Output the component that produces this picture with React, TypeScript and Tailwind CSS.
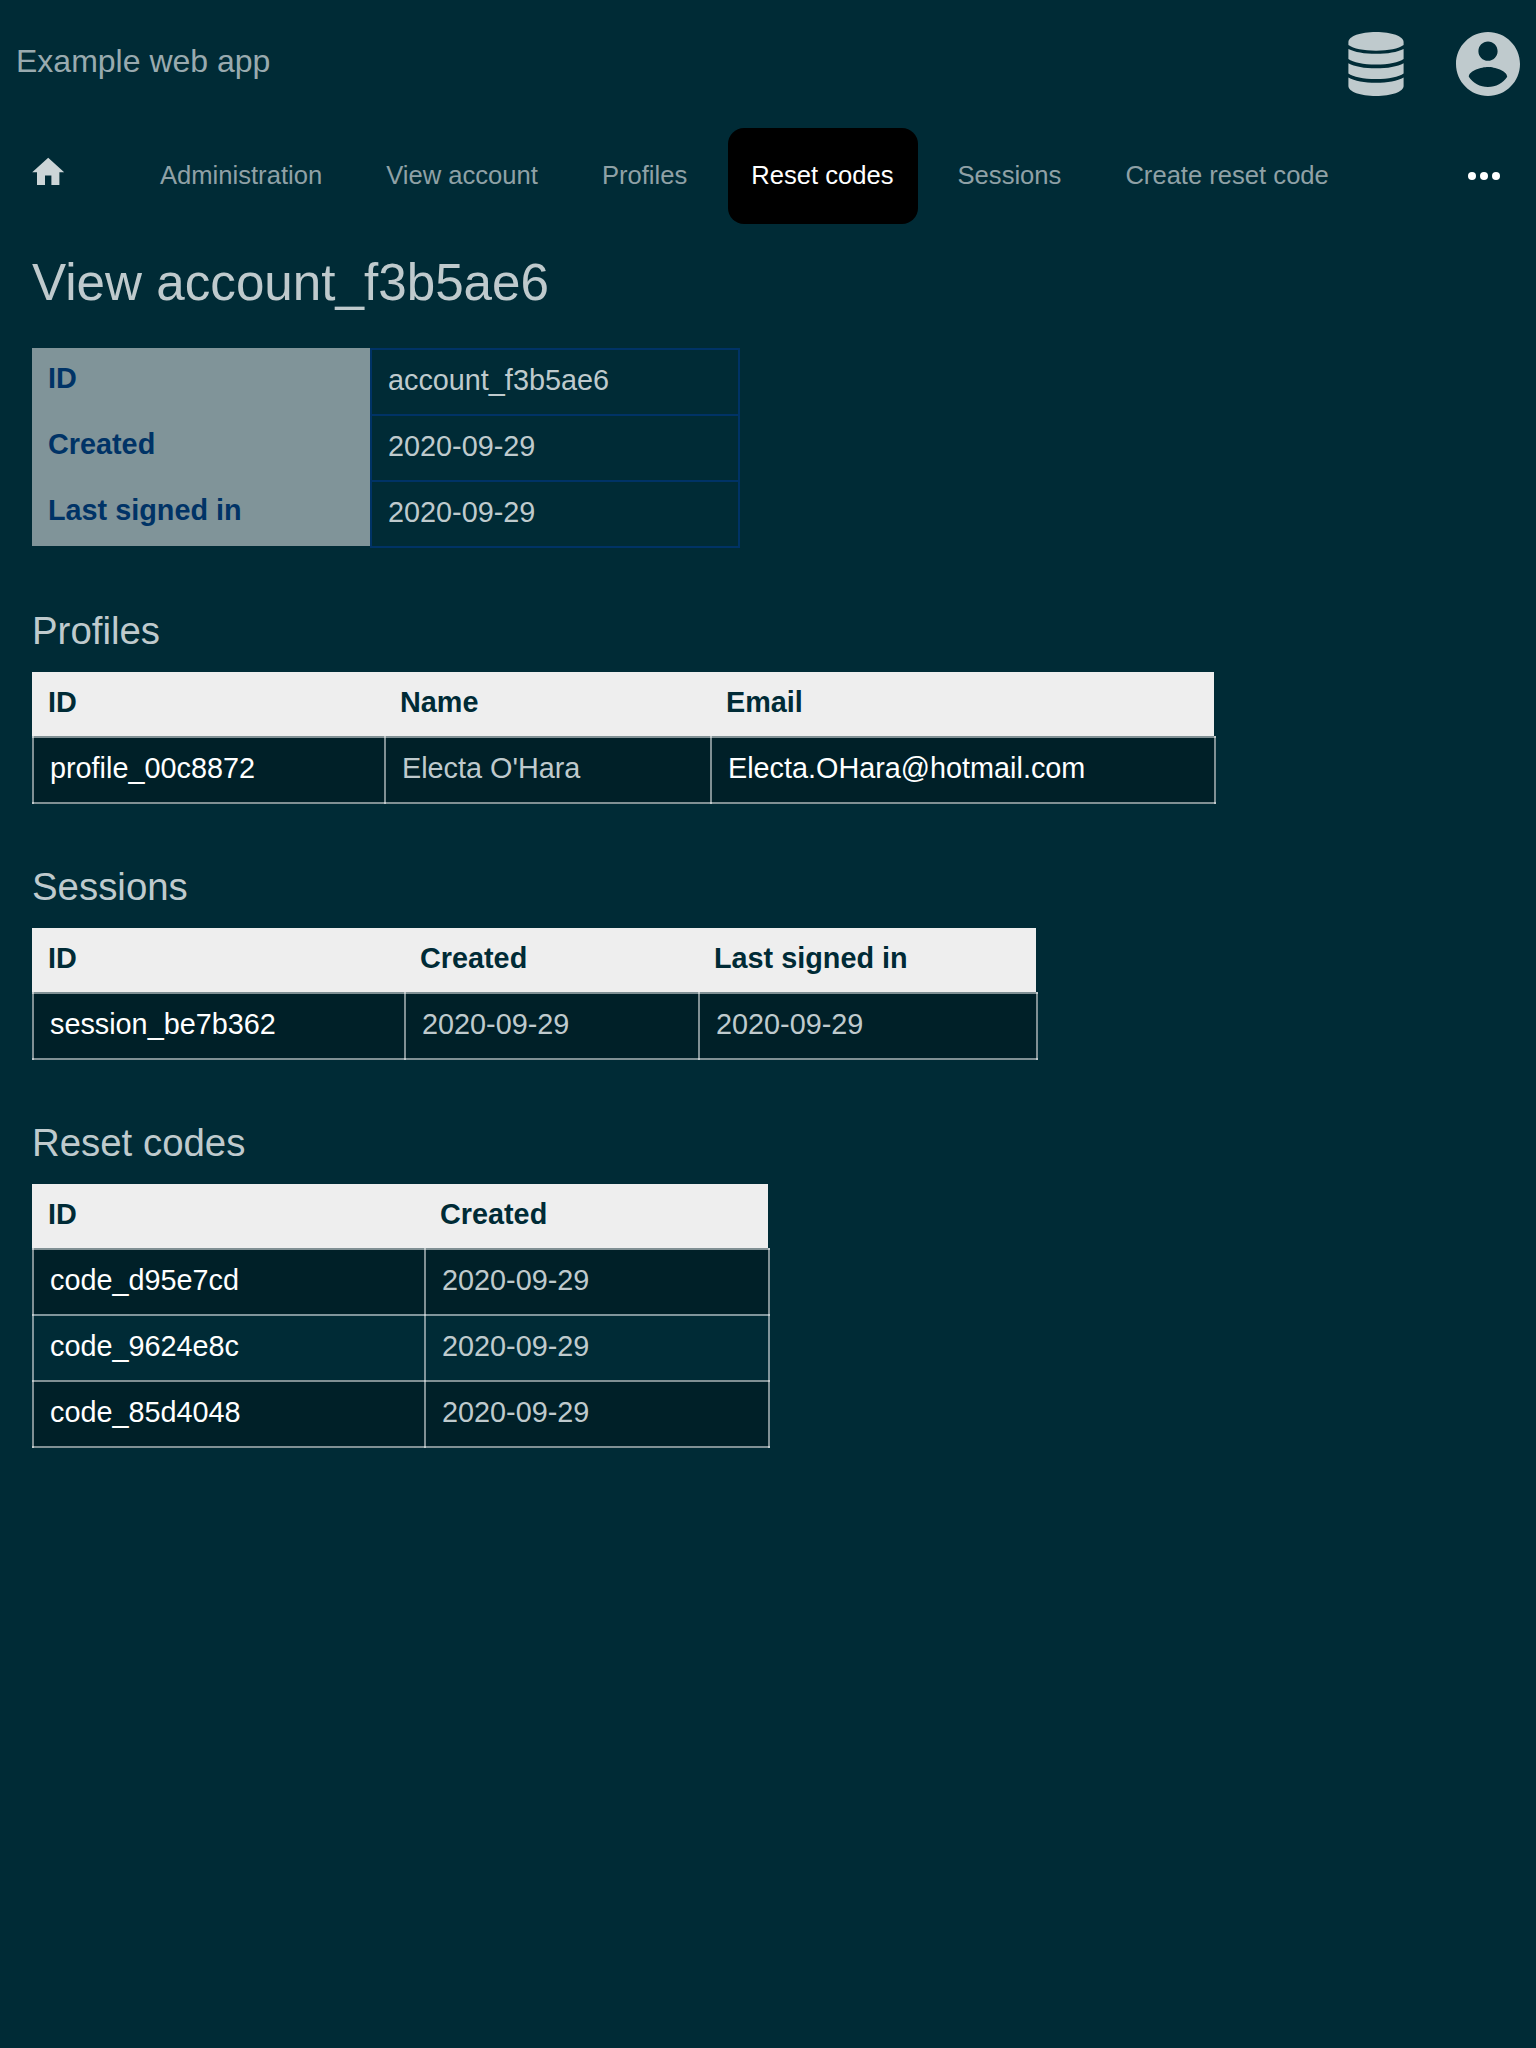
import React from "react";
import { MdHome } from "react-icons/md";

const navItems = [
  { label: "Administration", active: false },
  { label: "View account", active: false },
  { label: "Profiles", active: false },
  { label: "Reset codes", active: true },
  { label: "Sessions", active: false },
  { label: "Create reset code", active: false },
];

const details = [
  ["ID", "account_f3b5ae6"],
  ["Created", "2020-09-29"],
  ["Last signed in", "2020-09-29"],
];

type Section = {
  title: string;
  grid: string;
  head: string[];
  rows: { text: string; link?: boolean }[][];
};

const sections: Section[] = [
  {
    title: "Profiles",
    grid: "grid w-[1182px] grid-cols-[352px_326px_504px]",
    head: ["ID", "Name", "Email"],
    rows: [
      [
        { text: "profile_00c8872", link: true },
        { text: "Electa O'Hara" },
        { text: "Electa.OHara@hotmail.com", link: true },
      ],
    ],
  },
  {
    title: "Sessions",
    grid: "grid w-[1004px] grid-cols-[372px_294px_338px]",
    head: ["ID", "Created", "Last signed in"],
    rows: [
      [{ text: "session_be7b362", link: true }, { text: "2020-09-29" }, { text: "2020-09-29" }],
    ],
  },
  {
    title: "Reset codes",
    grid: "grid w-[736px] grid-cols-[392px_344px]",
    head: ["ID", "Created"],
    rows: [
      [{ text: "code_d95e7cd", link: true }, { text: "2020-09-29" }],
      [{ text: "code_9624e8c", link: true }, { text: "2020-09-29" }],
      [{ text: "code_85d4048", link: true }, { text: "2020-09-29" }],
    ],
  },
];

function DatabaseIcon({ className }: { className: string }) {
  return (
    <svg viewBox="0 0 56 64" fill="currentColor" className={className}>
      <path d="M28 0C12.500 0 .4 4.300.4 10v3C5.500 16.700 15.500 18.700 28 18.700s22.500-2 27.600-5.700V10C55.600 4.300 43.500 0 28 0z" />
      <path d="M.4 16.900C6.500 20 16.500 21.800 28 21.800S49.500 20 55.600 16.900v10.200C51 30.600 40.500 32.600 28 32.600S5 30.600.4 27.100z" />
      <path d="M.4 31.200C6.500 34.600 16.500 36.300 28 36.300S49.500 34.600 55.600 31.200v10.300C51 45 40.500 47 28 47S5 45 .4 41.500z" />
      <path d="M.4 45.400C6.500 48.900 16.500 50.700 28 50.700s21.500-1.800 27.600-5.300V54c0 5.700-12.100 10-27.600 10S.4 59.700.4 54z" />
    </svg>
  );
}

function AccountIcon({ className }: { className: string }) {
  return (
    <svg viewBox="2 2 20 20" fill="currentColor" className={className}>
      <path d="M12 2C6.480 2 2 6.480 2 12s4.480 10 10 10 10-4.480 10-10S17.520 2 12 2zm0 3c1.660 0 3 1.340 3 3s-1.340 3-3 3-3-1.340-3-3 1.340-3 3-3zm0 14.200c-2.500 0-4.710-1.280-6-3.220.03-1.990 4-3.080 6-3.080 1.990 0 5.970 1.090 6 3.080-1.290 1.940-3.500 3.220-6 3.220z" />
    </svg>
  );
}

function DataTable({ section }: { section: Section }) {
  const lastRow = section.rows.length - 1;
  return (
    <section className="mt-[60px]">
      <h2 className="h-[44px] text-[38.4px] leading-[46px] text-[#bfcacd]">{section.title}</h2>
      <div className="mt-5 w-fit text-[28.8px] leading-[32px]">
        <div className={section.grid}>
          {section.head.map((h) => (
            <div key={h} className="h-16 bg-[#eee] px-4 pt-[14px] font-bold text-[#002b36]">
              {h}
            </div>
          ))}
        </div>
        {section.rows.map((row, i) => (
          <div
            key={i}
            className={
              "w-[calc(100%+2px)] border-t-2 border-white/50 last:border-b-2 " +
              (i % 2 === 0 ? "bg-[#002028]" : "bg-[#002b36]")
            }
          >
            <div className={section.grid}>
              {row.map((c, j) => (
                <div
                  key={j}
                  className={
                    "-mt-0.5 border-l-2 border-white/50 px-4 pt-4 last:-mr-0.5 last:border-r-2 " +
                    (i === lastRow ? "-mb-0.5 h-[68px] " : "h-[66px] ") +
                    (c.link ? "text-white" : "text-[#bfcacd]")
                  }
                >
                  {c.text}
                </div>
              ))}
            </div>
          </div>
        ))}
      </div>
    </section>
  );
}

export default function App() {
  return (
    <div className="h-[2048px] w-[1536px] overflow-hidden bg-[#002b36] font-['Liberation_Sans',Arial,sans-serif]">
      <header className="flex h-32 items-center justify-between px-4">
        <div className="-mt-1.5 text-[32px] leading-[36px] text-[#99aaaf]">Example web app</div>
        <div className="flex items-center gap-[52px] text-[#bfcacd]">
          <DatabaseIcon className="h-16 w-14" />
          <AccountIcon className="size-16" />
        </div>
      </header>
      <nav className="flex h-24 items-center pl-[28.8px] pr-9 text-[25.6px] leading-[30px]">
        <MdHome className="-mt-[7px] size-[38.4px] text-[#ccd5d7]" />
        <div className="ml-[68.8px] flex h-full gap-[16px]">
          {navItems.map((n) => (
            <a
              key={n.label}
              className={
                "flex h-full items-center rounded-2xl pr-6 pb-0.5 " +
                (n.active ? "ml-[0.5px] bg-black pl-[23.5px] text-white" : "pl-6 text-[#8fa1a6]")
              }
            >
              {n.label}
            </a>
          ))}
        </div>
        <svg viewBox="0 0 32 8" className="ml-auto h-2 w-8 fill-white">
          <circle cx="4" cy="4" r="4" />
          <circle cx="16" cy="4" r="4" />
          <circle cx="28" cy="4" r="4" />
        </svg>
      </nav>
      <main className="px-8">
        <h1 className="mt-[29px] h-[60px] text-[51.2px] leading-[60px] text-[#bfcacd]">
          View account_f3b5ae6
        </h1>
        <div className="mt-[35px] w-fit text-[28.8px] leading-[32px]">
          {details.map(([k, v]) => (
            <div key={k} className="flex h-[66px]">
              <div className="w-[338px] bg-[#809499] px-4 pt-[14px] font-bold text-[#003366]">{k}</div>
              <div className="h-[68px] w-[370px] border-2 border-[#003366] px-4 pt-[14px] text-[#bfcacd]">
                {v}
              </div>
            </div>
          ))}
        </div>
        <div className="h-0.5" />
        {sections.map((s) => (
          <DataTable key={s.title} section={s} />
        ))}
      </main>
    </div>
  );
}
